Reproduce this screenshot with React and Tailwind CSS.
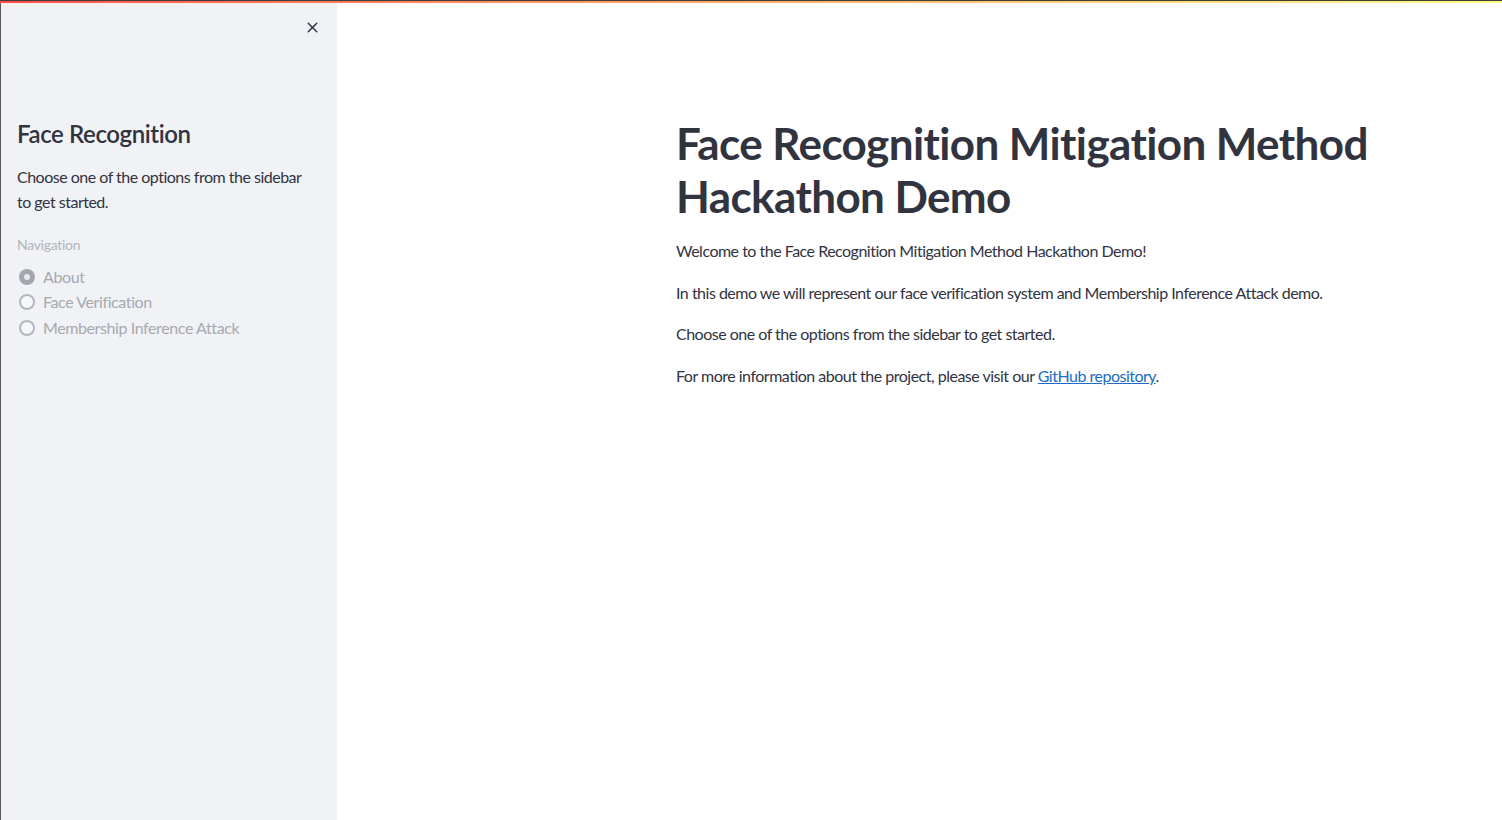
import { X } from 'lucide-react'

const font = { fontFamily: 'Lato, "Noto Sans", sans-serif' }

function Radio({ label, checked }) {
  return (
    <label className="flex items-center h-[25.5px] gap-2">
      {checked ? (
        <span className="w-4 h-4 rounded-full bg-[#a3a6af] flex items-center justify-center">
          <span className="w-[6px] h-[6px] rounded-full bg-[#e9eaee]" />
        </span>
      ) : (
        <span className="w-4 h-4 rounded-full border-2 border-[#b3b6bd] bg-[#f6f7f9]" />
      )}
      <span className="text-[16px] tracking-[-0.4px] text-[#a7a9b0]">{label}</span>
    </label>
  )
}

export default function App() {
  return (
    <div style={font} className="w-[1502px] h-[820px] flex flex-col bg-white overflow-hidden text-[#31333f]">
      <div className="h-px bg-[#3c3c3c]" />
      <div className="h-[2px] bg-gradient-to-r from-[#ff4b4b] to-[#fffd80]" />
      <div className="flex flex-1 min-h-0">
        <div className="w-px bg-[#5a5a5a]" />
        {/* sidebar */}
        <aside className="w-[336px] bg-[#f0f2f6] px-4 relative">
          <button className="absolute right-[16px] top-[16px] text-[#31333f]">
            <X size={17} strokeWidth={2} />
          </button>
          <h2 className="mt-[113px] text-[24px] font-semibold leading-[36px] tracking-[-0.4px]">Face Recognition</h2>
          <p className="mt-[12px] w-[292px] text-[16px] leading-[25px] tracking-[-0.5px]">
            Choose one of the options from the sidebar to get started.
          </p>
          <div className="mt-[20px] text-[14px] tracking-[-0.3px] text-[#b3b5bb]">Navigation</div>
          <div className="mt-[9px] flex flex-col ml-[2px]">
            <Radio label="About" checked />
            <Radio label="Face Verification" />
            <Radio label="Membership Inference Attack" />
          </div>
        </aside>
        {/* main */}
        <main className="flex-1 pl-[339px] pt-[114px]">
          <div className="w-[704px]">
            <h1 className="text-[44px] font-bold leading-[53px] tracking-[-0.6px]">
              Face Recognition Mitigation Method Hackathon Demo
            </h1>
            <div className="mt-[15px] text-[16px] leading-[25.6px] tracking-[-0.5px] flex flex-col gap-4">
              <p>Welcome to the Face Recognition Mitigation Method Hackathon Demo!</p>
              <p>In this demo we will represent our face verification system and Membership Inference Attack demo.</p>
              <p>Choose one of the options from the sidebar to get started.</p>
              <p>
                For more information about the project, please visit our{' '}
                <a href="#" className="text-[#1c6bc4] underline">GitHub repository</a>.
              </p>
            </div>
          </div>
        </main>
      </div>
    </div>
  )
}
